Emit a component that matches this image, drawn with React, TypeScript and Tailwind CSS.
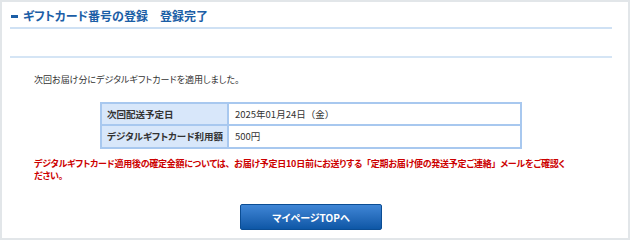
import React from "react";

const N = ({ children }: { children: React.ReactNode }) => (
  <span className="[font-feature-settings:normal]">{children}</span>
);

export default function App() {
  return (
    <div className="w-[630px] h-[240px] bg-[#e2e6e9] p-[2px] font-['Noto_Sans_CJK_JP','Noto_Sans',sans-serif] [font-feature-settings:'palt']">
      <div className="h-full bg-white pl-[8px] pr-[16px]">
        <div className="h-[25px] flex items-center pt-[3px] pl-[1px]">
          <span className="inline-block w-[7px] h-[3px] bg-[#1b5ea6] mr-[5px]" />
          <span className="text-[12px] font-bold text-[#1b5ea6] leading-none">
            ギフトカード番号の登録<N>　</N>登録完了
          </span>
        </div>
        <div className="h-[2px] bg-[#cfe1f4]" />
        <div className="h-[27px]" />
        <div className="h-[2px] bg-[#d5e5f5]" />
        <div className="pl-[24px] pt-[15px] text-[9px] leading-[14px] text-[#333]">
          次回お届け分にデジタルギフトカードを適用しました<N>。</N>
        </div>
        <div className="flex justify-center mt-[15px]">
          <table className="w-[422px] border-collapse text-[9.5px] text-[#333]">
            <tbody>
              <tr className="h-[22px]">
                <th className="w-[127px] bg-[#d8e7fa] border-2 border-[#a8c8ef] text-left font-bold pl-[5px] py-0 whitespace-nowrap">
                  次回配送予定日
                </th>
                <td className="border-2 border-[#a8c8ef] pl-[6px] py-0">
                  2025年01月24日<N>（金）</N>
                </td>
              </tr>
              <tr className="h-[23px]">
                <th className="bg-[#d8e7fa] border-2 border-[#a8c8ef] text-left font-bold pl-[5px] py-0 whitespace-nowrap">
                  デジタルギフトカード利用額
                </th>
                <td className="border-2 border-[#a8c8ef] pl-[6px] py-0">500円</td>
              </tr>
            </tbody>
          </table>
        </div>
        <div className="pl-[24px] mt-[9px] text-[9px] tracking-[-0.25px] leading-[12px] font-bold text-[#cc0000] whitespace-nowrap">
          デジタルギフトカード適用後の確定金額については<N>、</N>お届け予定日10日前にお送りする<N>「</N>定期お届け便の発送予定ご連絡<N>」</N>メールをご確認く
          <br />
          ださい<N>。</N>
        </div>
        <div className="flex justify-center mt-[22px]">
          <button className="w-[142px] h-[26px] rounded-[2px] bg-gradient-to-b from-[#3f86d6] to-[#0d57a6] border border-[#0b4d94] text-white text-[10px] font-bold">
            マイページTOPへ
          </button>
        </div>
      </div>
    </div>
  );
}
